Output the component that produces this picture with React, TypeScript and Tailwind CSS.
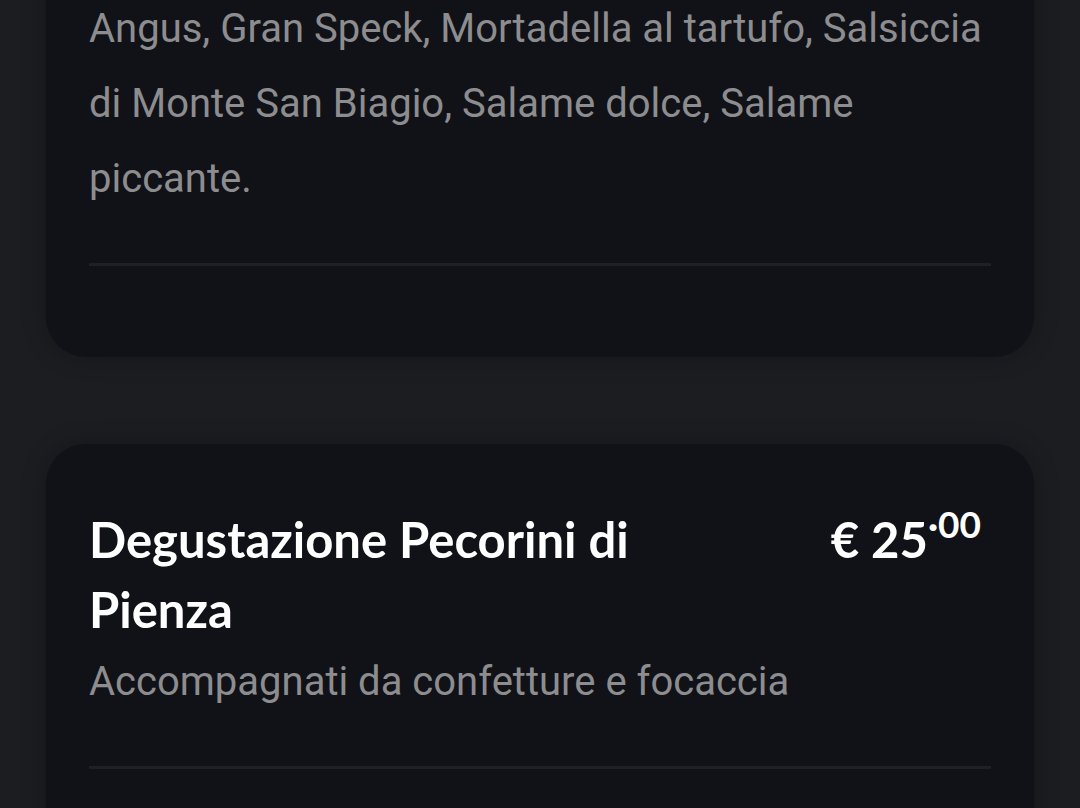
import React from "react";

type Item = {
  title?: string;
  description: string;
  price?: { whole: string; cents: string };
};

const Divider: React.FC = () => (
  <div className="mt-[47px] h-[3px] w-full bg-[#1f2025]" />
);

const MenuCard: React.FC<{ item: Item; className?: string }> = ({
  item,
  className,
}) => (
  <div
    className={
      "rounded-[40px] bg-[#111217] px-[43px] pb-[91px] shadow-[0_0_24px_rgba(0,0,0,0.25)] " +
      (className ?? "")
    }
  >
    {item.title && (
      <div className="flex items-start justify-between">
        <h2 className="w-[600px] font-['Lato',sans-serif] text-[49px] font-bold leading-[70px] text-white">
          {item.title}
        </h2>
        {item.price && (
          <div className="mr-[10px] flex items-start font-['Lato',sans-serif] font-bold text-white">
            <span className="text-[49px] leading-[70px]">€ {item.price.whole}</span>
            <span className="-mt-[4px] text-[37px] leading-[48px]">
              ·{item.price.cents}
            </span>
          </div>
        )}
      </div>
    )}
    <p className="font-['Roboto',sans-serif] text-[40px] leading-[75px] text-[#8d8d8f]">
      {item.description}
    </p>
    <Divider />
  </div>
);

export default function App() {
  return (
    <div className="h-[808px] w-[1080px] overflow-hidden bg-[#1c1d21]">
      <div className="-mt-[109px] flex flex-col gap-[87px] px-[46px]">
        <MenuCard
          className="pt-[100px]"
          item={{
            description:
              "Angus, Gran Speck, Mortadella al tartufo, Salsiccia di Monte San Biagio, Salame dolce, Salame piccante.",
          }}
        />
        <MenuCard
          className="pt-[60px]"
          item={{
            title: "Degustazione Pecorini di Pienza",
            description: "Accompagnati da confetture e focaccia",
            price: { whole: "25", cents: "00" },
          }}
        />
      </div>
    </div>
  );
}
